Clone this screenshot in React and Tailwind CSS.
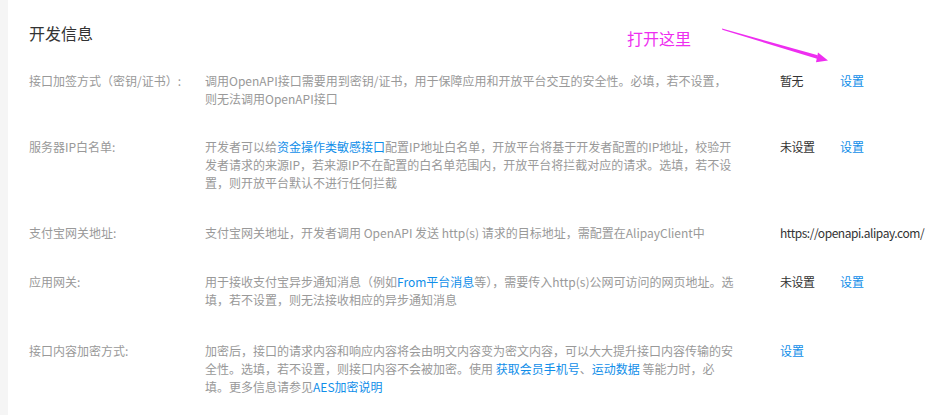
import React from 'react';

const FONT = "font-['Noto_Sans_CJK_SC','Microsoft_YaHei',sans-serif]";

const Link = ({ children }) => <span className="text-[#108ee9]">{children}</span>;

const rows = [
  {
    label: '接口加签方式（密钥/证书）:',
    lines: [
      ['调用OpenAPI接口需要用到密钥/证书，用于保障应用和开放平台交互的安全性。必填，若不设置，'],
      ['则无法调用OpenAPI接口'],
    ],
    value: '暂无',
    action: '设置',
    gap: 'mb-[30px]',
  },
  {
    label: '服务器IP白名单:',
    lines: [
      ['开发者可以给', <Link key="l">资金操作类敏感接口</Link>, '配置IP地址白名单，开放平台将基于开发者配置的IP地址，校验开'],
      ['发者请求的来源IP，若来源IP不在配置的白名单范围内，开放平台将拦截对应的请求。选填，若不设'],
      ['置，则开放平台默认不进行任何拦截'],
    ],
    value: '未设置',
    action: '设置',
    gap: 'mb-[32px]',
  },
  {
    label: '支付宝网关地址:',
    lines: [['支付宝网关地址，开发者调用 OpenAPI 发送 http(s) 请求的目标地址，需配置在AlipayClient中']],
    value: 'https://openapi.alipay.com/',
    gap: 'mb-[31px]',
  },
  {
    label: '应用网关:',
    lines: [
      ['用于接收支付宝异步通知消息（例如', <Link key="l">From平台消息</Link>, '等），需要传入http(s)公网可访问的网页地址。选'],
      ['填，若不设置，则无法接收相应的异步通知消息'],
    ],
    value: '未设置',
    action: '设置',
    gap: 'mb-[33px]',
  },
  {
    label: '接口内容加密方式:',
    lines: [
      ['加密后，接口的请求内容和响应内容将会由明文内容变为密文内容，可以大大提升接口内容传输的安'],
      ['全性。选填，若不设置，则接口内容不会被加密。使用 ', <Link key="a">获取会员手机号</Link>, '、', <Link key="b">运动数据</Link>, ' 等能力时，必'],
      ['填。更多信息请参见', <Link key="c">AES加密说明</Link>],
    ],
    action: '设置',
    gap: '',
  },
];

const Row = ({ row }) => (
  <div className={`grid grid-cols-[176px_575px_60px_1fr] text-[12px] leading-[18px] ${row.gap}`}>
    <div className="text-[#999] whitespace-nowrap">{row.label}</div>
    <div className="text-[#999]">
      {row.lines.map((line, i) => (
        <div key={i} className="whitespace-nowrap">{line}</div>
      ))}
    </div>
    {row.value ? (
      <>
        <div className="text-[#333] whitespace-nowrap tracking-[-0.45px]">{row.value}</div>
        <div className="text-[#108ee9]">{row.action}</div>
      </>
    ) : (
      <div className="text-[#108ee9]">{row.action}</div>
    )}
  </div>
);

export default function App() {
  return (
    <div className={`relative w-[925px] h-[415px] overflow-hidden bg-[#f5f5f5] flex ${FONT}`}>
      <div className="ml-[8px] flex-1 bg-white pl-[21px] pt-[21px]">
        <h2 className="text-[16px] leading-[24px] text-[#333] mb-[27px]">开发信息</h2>
        {rows.map((row, i) => (
          <Row key={i} row={row} />
        ))}
      </div>

      {/* annotation overlay */}
      <div className="absolute left-[627px] top-[26px] text-[16px] leading-[24px] text-[#ee2ef0]">打开这里</div>
      <svg className="absolute left-0 top-0" width="925" height="415" viewBox="0 0 925 415">
        <polygon points="722,28.4 722.3,29.8 817,58.8 817.8,55.3" fill="#ee2ef0" />
        <polygon points="818,52.6 828,60.5 816,62.2" fill="#ee2ef0" />
      </svg>
    </div>
  );
}
